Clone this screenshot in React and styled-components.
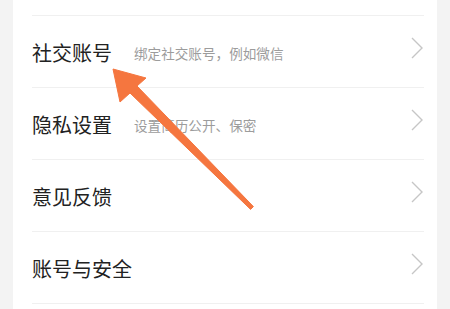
import React from "react";
import styled, { createGlobalStyle } from "styled-components";

const Global = createGlobalStyle`
  html, body { margin: 0; padding: 0; background: #f3f3f3; }
  body { font-family: "Noto Sans CJK SC", "Noto Sans", sans-serif; }
`;

const Page = styled.div`
  position: relative;
  width: 450px;
  height: 309px;
  overflow: hidden;
  background: #f3f3f3;
  padding: 0 13px;
  box-sizing: border-box;
`;

const Card = styled.div`
  background: #fff;
  height: 100%;
  padding: 15px 13px 0 19px;
  box-sizing: border-box;
`;

const Row = styled.div`
  display: flex;
  align-items: center;
  height: 72px;
  border-top: 1px solid #f0f0f0;
  box-sizing: border-box;
`;

const Title = styled.span`
  font-size: 20px;
  color: #222;
  line-height: 1;
  margin-top: 2px;
`;

const Sub = styled.span`
  font-size: 13.6px;
  color: #9c9c9c;
  margin-left: 22px;
  margin-top: 5px;
  line-height: 1;
  flex: 1;
`;

const Spacer = styled.span`
  flex: 1;
`;

const Chevron = styled.svg`
  width: 12px;
  height: 22px;
  margin-top: -7px;
  margin-right: 1px;
  flex: none;
`;

const Arrow = styled.svg`
  position: absolute;
  left: 0;
  top: 0;
  width: 450px;
  height: 309px;
  pointer-events: none;
`;

const items = [
  { title: "社交账号", sub: "绑定社交账号，例如微信" },
  { title: "隐私设置", sub: "设置简历公开、保密" },
  { title: "意见反馈" },
  { title: "账号与安全" },
  { title: "" },
];

export default function App() {
  return (
    <Page>
      <Global />
      <Card>
        {items.map((it, i) => (
          <Row key={i}>
            <Title>{it.title}</Title>
            {it.sub ? <Sub>{it.sub}</Sub> : <Spacer />}
            {it.title && (
              <Chevron viewBox="0 0 12 22">
                <polyline points="1,1 11,11 1,21" fill="none" stroke="#c6c6c6" strokeWidth="1.4" />
              </Chevron>
            )}
          </Row>
        ))}
      </Card>
      <Arrow viewBox="0 0 450 309">
        <polygon
          points="113,69 146,78 137,86 253.4,206.6 250.6,209.4 130,93 120,102"
          fill="#f5763f"
          stroke="#f5763f"
          strokeWidth="1"
          strokeLinejoin="round"
        />
      </Arrow>
    </Page>
  );
}
